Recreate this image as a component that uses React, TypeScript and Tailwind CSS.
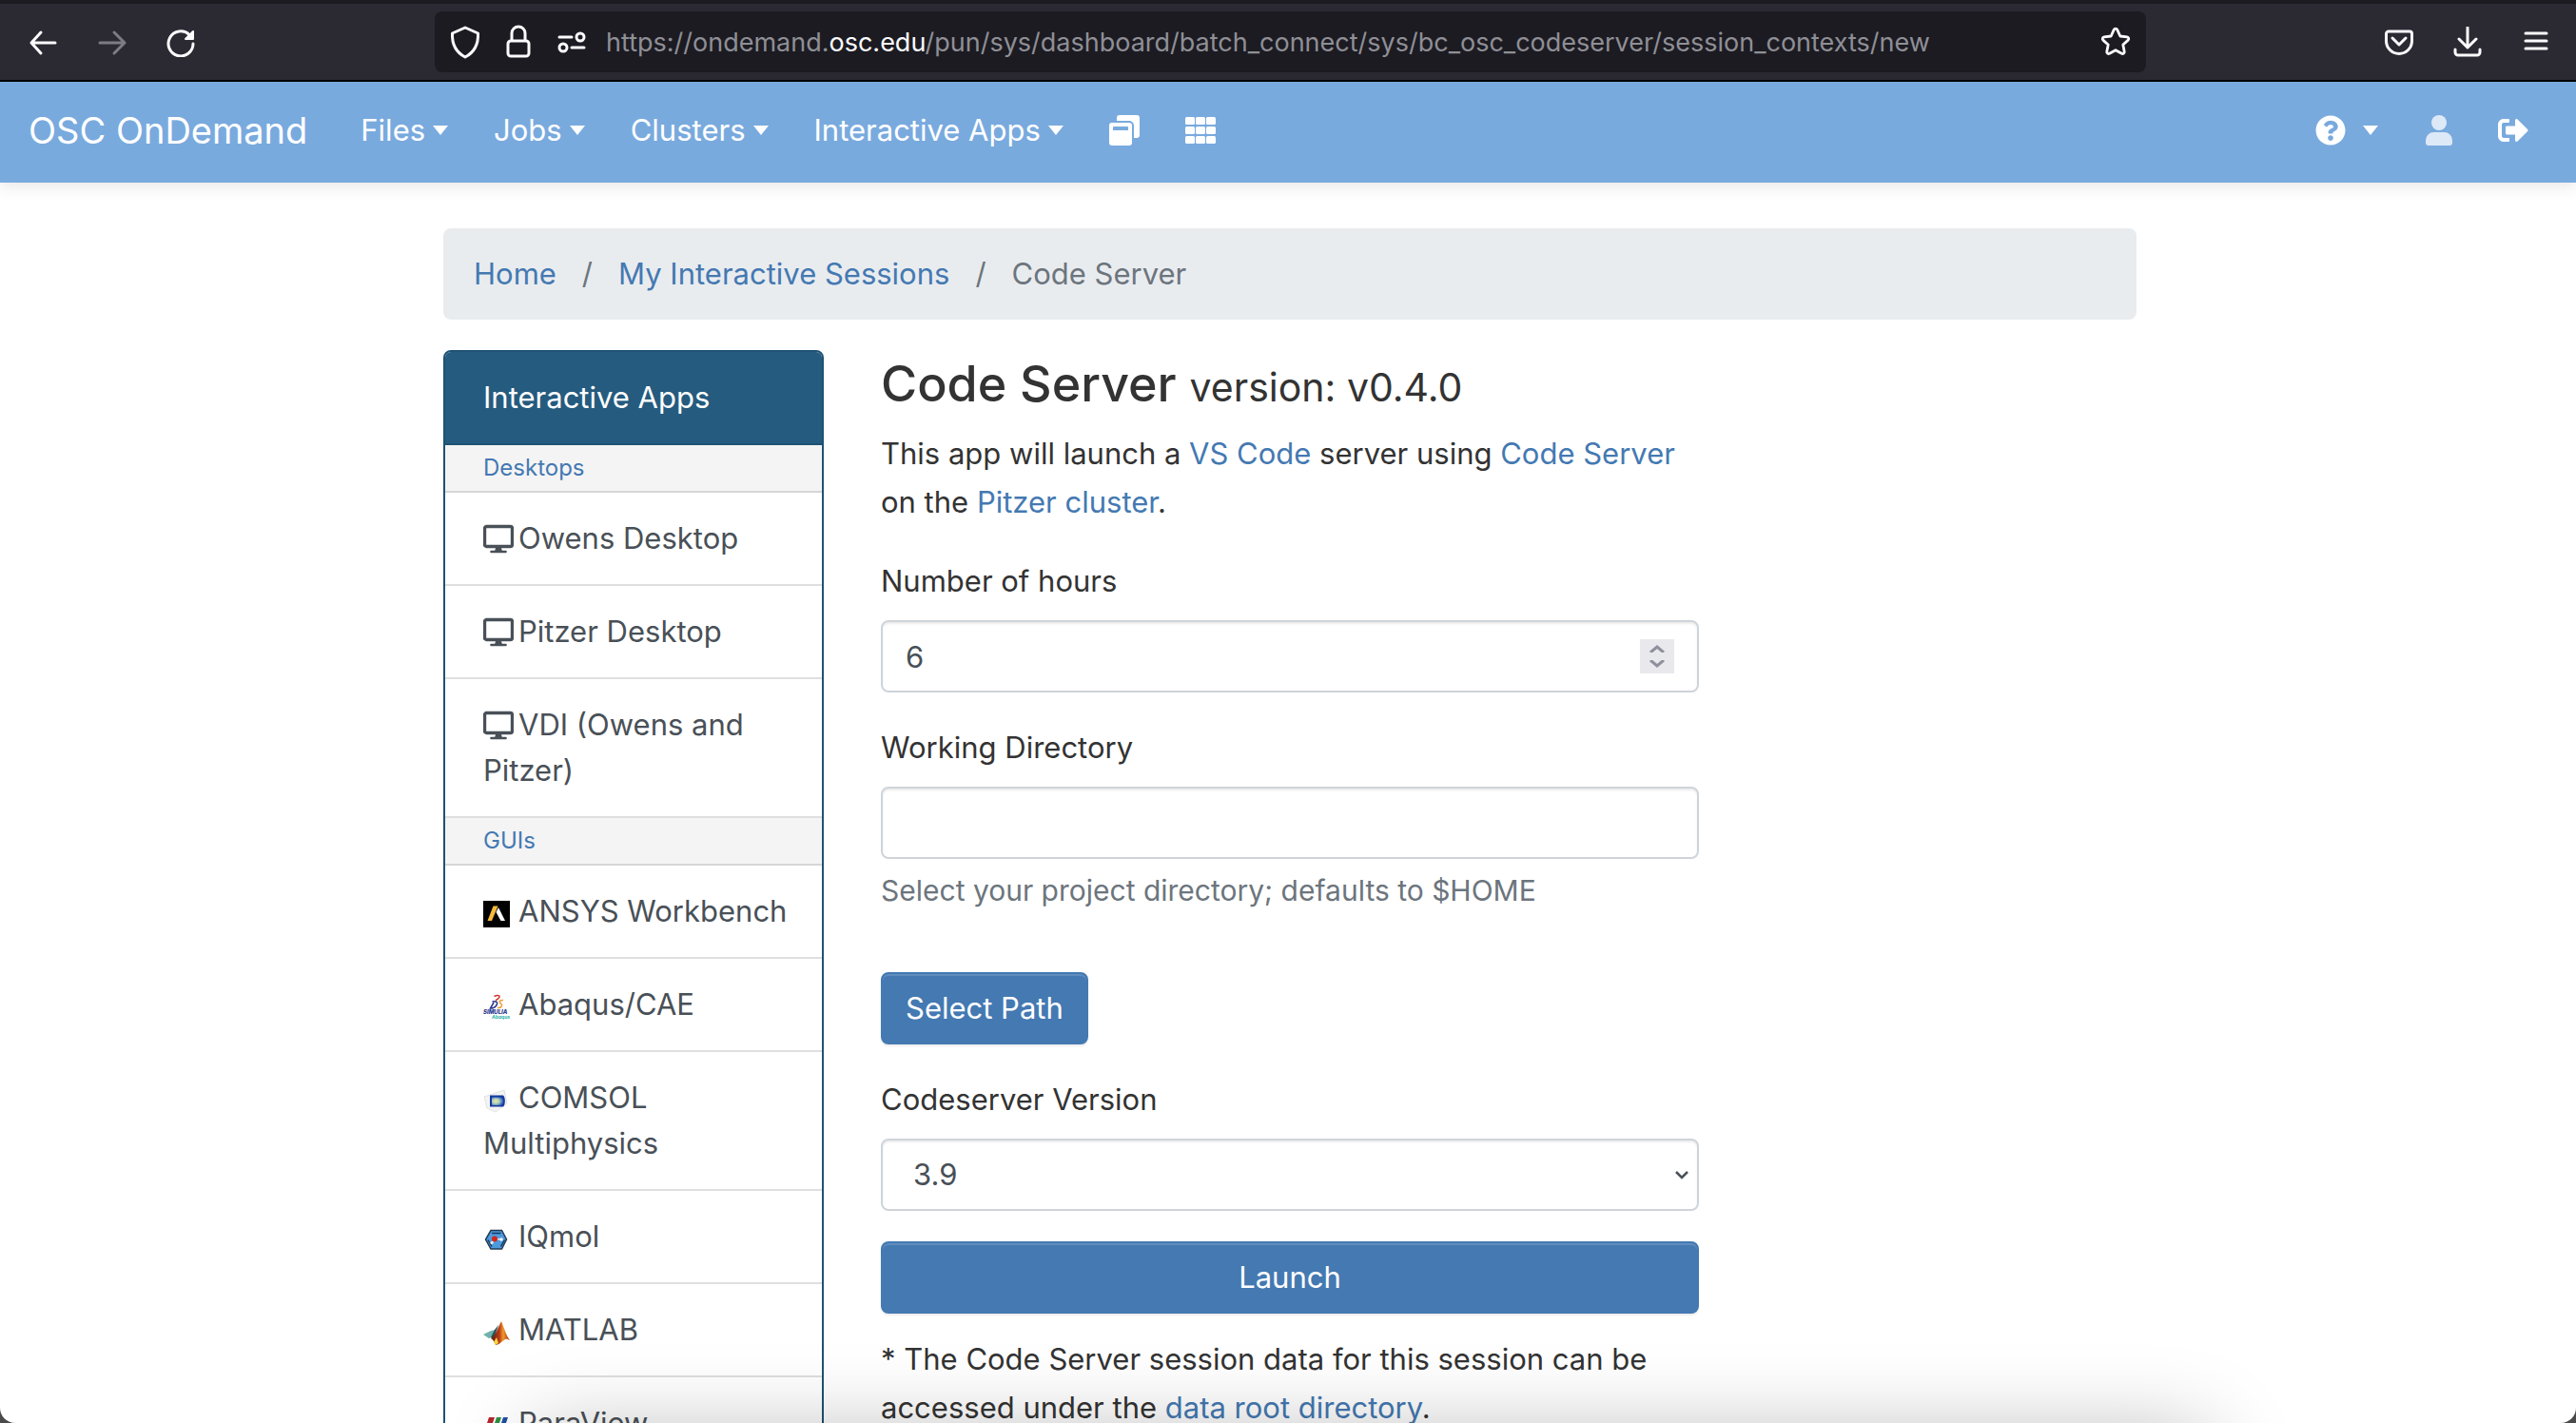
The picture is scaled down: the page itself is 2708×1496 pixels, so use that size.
import { useState } from "react";
import type { ReactNode } from "react";

function Caret() {
  return <span className="h-0 w-0 border-x-8 border-t-10 border-x-transparent border-t-white" />;
}

function NavMenu({ label }: { label: string }) {
  return (
    <button className="flex items-center gap-2 text-[31px] leading-12 text-white">
      {label}
      <Caret />
    </button>
  );
}

function BrowserBar() {
  return (
    <header className="flex h-[86px] items-center border-t-4 border-b-2 border-t-[#1c1b22] border-b-black bg-[#2b2a33] pr-[26px] pl-[30px]">
      <div className="flex w-[427px] shrink-0 items-center gap-[40px]">
        <button aria-label="Back">
          <svg className="h-8 w-8" viewBox="0 0 32 32" fill="none" stroke="#fbfbfe" strokeWidth="3" strokeLinecap="round" strokeLinejoin="round">
            <path d="M28 17H3M13 6 3 17l10 11" />
          </svg>
        </button>
        <button aria-label="Forward">
          <svg className="h-8 w-8" viewBox="0 0 32 32" fill="none" stroke="#7d7c83" strokeWidth="3" strokeLinecap="round" strokeLinejoin="round">
            <path d="M3 17h26M18 6l11 11-11 11" />
          </svg>
        </button>
        <button aria-label="Reload">
          <svg className="h-8 w-8" viewBox="0 0 32 32" fill="none" stroke="#fbfbfe" strokeWidth="3" strokeLinecap="round" strokeLinejoin="round">
            <path d="M29 18A13 13 0 1 1 25 8.500" />
            <path d="M29 5v8h-8z" fill="#fbfbfe" strokeWidth="2" />
          </svg>
        </button>
      </div>
      <div className="flex h-16 w-[1799px] items-center gap-[24px] rounded-lg bg-[#1c1b22] px-4">
        <svg className="h-9 w-8 shrink-0" viewBox="0 0 32 36" fill="none" stroke="#fbfbfe" strokeWidth="3" strokeLinejoin="round">
          <path d="M16 3 29.500 9c.5 11-3 19.500-13.500 25C5.500 28.500 2 20 2.500 9z" />
        </svg>
        <svg className="h-9 w-8 shrink-0" viewBox="0 0 32 36" fill="none" stroke="#fbfbfe" strokeWidth="3" strokeLinejoin="round">
          <rect x="5" y="17" width="22" height="16" rx="3" />
          <path d="M9 17V9a7 7 0 0 1 14 0v8" />
        </svg>
        <svg className="h-9 w-8 shrink-0" viewBox="0 0 32 36" fill="none" stroke="#fbfbfe" strokeWidth="3" strokeLinecap="round">
          <path d="M3 13h13M16 24h13" />
          <circle cx="25" cy="13" r="4" />
          <circle cx="7" cy="24" r="4" />
        </svg>
        <div
          role="textbox"
          aria-label="Search or enter address"
          contentEditable
          suppressContentEditableWarning
          spellCheck={false}
          className="-ml-1 min-w-0 flex-1 truncate pt-0.5 text-[27px] leading-10 text-[#8f8f96]"
        >
          https://ondemand.<span className="text-[#fbfbfe]">osc.edu</span>
          /pun/sys/dashboard/batch_connect/sys/bc_osc_codeserver/session_contexts/new
        </div>
        <button aria-label="Bookmark this page">
          <svg className="h-8 w-8" viewBox="0 0 32 32" fill="none" stroke="#fbfbfe" strokeWidth="2.800" strokeLinejoin="round">
            <path d="M14.300 3.200c.7-1.500 2.700-1.500 3.400 0l3.100 6.800 7.300.9c1.600.2 2.200 2.100 1.100 3.200L23.800 19l1.400 7.300c.3 1.600-1.400 2.800-2.800 2L16 24.700l-6.400 3.600c-1.400.8-3.100-.4-2.800-2L8.200 19l-5.400-4.900c-1.100-1.100-.5-3 1.100-3.200l7.300-.9z" />
          </svg>
        </button>
      </div>
      <div className="ml-auto flex items-center gap-[40px]">
        <button aria-label="Save to Pocket">
          <svg className="h-8 w-8" viewBox="0 0 32 32" fill="none" stroke="#fbfbfe" strokeWidth="3" strokeLinecap="round" strokeLinejoin="round">
            <path d="M5 5h22a2.500 2.500 0 0 1 2.500 2.500V15a13.500 13.500 0 0 1-27 0V7.500A2.500 2.500 0 0 1 5 5z" />
            <path d="m9 12 7 7 7-7" />
          </svg>
        </button>
        <button aria-label="Downloads">
          <svg className="h-8 w-8" viewBox="0 0 32 32" fill="none" stroke="#fbfbfe" strokeWidth="3" strokeLinecap="round" strokeLinejoin="round">
            <path d="M16 1v21M7 13l9 9 9-9M3 24v3a3 3 0 0 0 3 3h20a3 3 0 0 0 3-3v-3" />
          </svg>
        </button>
        <button aria-label="Menu">
          <svg className="h-8 w-8" viewBox="0 0 32 32" fill="none" stroke="#fbfbfe" strokeWidth="3" strokeLinecap="round">
            <path d="M5 7h22M5 15h22M5 23h22" />
          </svg>
        </button>
      </div>
    </header>
  );
}

function NavBar() {
  return (
    <nav className="relative flex h-[106px] items-center bg-[#79aade] px-[30px] pb-1 text-white shadow-[0_4px_16px_rgba(0,0,0,0.1)]">
      <a href="#home" className="text-[38px] leading-15">OSC OnDemand</a>
      <div className="ml-[56px] flex items-center gap-12">
        <NavMenu label="Files" />
        <NavMenu label="Jobs" />
        <NavMenu label="Clusters" />
        <NavMenu label="Interactive Apps" />
        <a href="#sessions" aria-label="My Interactive Sessions">
          <svg className="h-8 w-8" viewBox="0 0 32 32" fill="currentColor">
            <path d="M11 0h18a3 3 0 0 1 3 3v18a3 3 0 0 1-3 3h-3V11a5 5 0 0 0-5-5H8V3a3 3 0 0 1 3-3z" />
            <path fillRule="evenodd" d="M3 8h18a3 3 0 0 1 3 3v18a3 3 0 0 1-3 3H3a3 3 0 0 1-3-3V11a3 3 0 0 1 3-3zm2 4a1 1 0 0 0-1 1v3h16v-3a1 1 0 0 0-1-1z" />
          </svg>
        </a>
        <a href="#apps" aria-label="All Apps">
          <svg className="h-8 w-8" viewBox="0 0 32 32" fill="currentColor">
            {[2, 12, 22].map((y) => [0, 11, 22].map((x) => <rect key={`${x}-${y}`} x={x} y={y} width="10" height="8" rx="1.500" />))}
          </svg>
        </a>
      </div>
      <div className="ml-auto flex items-center">
        <button aria-label="Help" className="flex items-center gap-[18px]">
          <svg className="h-8 w-8" viewBox="0 0 512 512" fill="currentColor">
            <path d="M504 256c0 137-111 248-248 248S8 393 8 256 119 8 256 8s248 111 248 248zM262.700 90c-54.500 0-89.300 23-116.500 63.800-3.500 5.300-2.400 12.400 2.700 16.300l34.700 26.300c5.200 3.900 12.600 3 16.700-2.100 17.900-22.700 30.100-35.800 57.300-35.800 20.400 0 45.700 13.100 45.700 33 0 15-12.400 22.700-32.500 34C247.100 238.500 216 254.900 216 296v4c0 6.600 5.400 12 12 12h56c6.600 0 12-5.400 12-12v-1.300c0-28.500 83.200-29.600 83.200-106.700 0-58-60.200-102-116.500-102zM256 338c-25.400 0-46 20.600-46 46s20.600 46 46 46 46-20.600 46-46-20.600-46-46-46z" />
          </svg>
          <Caret />
        </button>
        <a href="#user" aria-label="User" className="ml-[50px] text-[#dde9f7]">
          <svg className="h-8 w-7" viewBox="0 0 28 32" fill="currentColor">
            <circle cx="14" cy="8" r="8" />
            <path d="M8.500 18h11a8.500 8.500 0 0 1 8.500 8.500V29a3 3 0 0 1-3 3H3a3 3 0 0 1-3-3v-2.500A8.500 8.500 0 0 1 8.500 18z" />
          </svg>
        </a>
        <a href="#logout" aria-label="Log Out" className="mr-[20px] ml-12">
          <svg className="h-8 w-8" viewBox="0 0 512 512" fill="currentColor">
            <path d="M497 273 329 441c-15 15-41 4.500-41-17v-96H152c-13.300 0-24-10.700-24-24v-96c0-13.300 10.700-24 24-24h136V88c0-21.400 25.900-32 41-17l168 168c9.300 9.400 9.300 24.600 0 34zM192 436v-40c0-6.600-5.400-12-12-12H96c-17.700 0-32-14.300-32-32V160c0-17.700 14.300-32 32-32h84c6.600 0 12-5.400 12-12V76c0-6.600-5.400-12-12-12H96c-53 0-96 43-96 96v192c0 53 43 96 96 96h84c6.600 0 12-5.400 12-12z" />
          </svg>
        </a>
      </div>
    </nav>
  );
}

const iconClass = "mr-[9px] inline-block h-7 w-7 align-[-6px]";

function DesktopIcon() {
  return (
    <svg className="mr-[5px] inline-block h-8 w-8 align-[-6px]" viewBox="0 0 32 32" fill="none" stroke="#495057" strokeLinejoin="round">
      <rect x="1.500" y="2.500" width="29" height="21" rx="2" strokeWidth="3.400" />
      <path d="M13 25h6l1 4h-8z" fill="#495057" stroke="none" />
      <path d="M8.500 29h15" strokeWidth="2.600" strokeLinecap="round" />
    </svg>
  );
}

function AnsysIcon() {
  return (
    <svg className={iconClass} viewBox="0 0 28 28">
      <path fill="#000" d="M0 0h28v28H0z" />
      <path fill="#f5b93b" d="M10.500 5.500h5L9 21H4.500z" />
      <path fill="#fff" d="M13.500 12l2.500-5 7 14h-4.500z" />
    </svg>
  );
}

function AbaqusIcon() {
  return (
    <svg className={iconClass} viewBox="0 0 28 28" fill="none">
      <path d="M11.500 2.500c4-2 7-.8 5 1.500-.8 1-2 2-3.500 2.500" stroke="#d0342c" strokeWidth="1.400" />
      <path d="M9.500 8c6-.8 6 1.500 4 4.500-1.500 2-3.500 2.500-6 2.500L11 9" stroke="#27348b" strokeWidth="1.500" />
      <path d="M21 6.500c-3-.3-4.500 1-3.500 2.500s2.500 1.500 2 3.500-2.500 2-4.500 2" stroke="#e9a23b" strokeWidth="1.500" />
      <text x="0" y="21" fontSize="6" fontWeight="800" fontStyle="italic" fill="#27348b">SIMULIA</text>
      <text x="9" y="25.500" fontSize="5" fontWeight="700" fontStyle="italic" fill="#2bb3ad">Abaqus</text>
    </svg>
  );
}

function ComsolIcon() {
  return (
    <svg className={iconClass} viewBox="0 0 28 28">
      <defs>
        <radialGradient id="comsol" cx="0.35" cy="0.5" r="0.7">
          <stop offset="0" stopColor="#f5e98c" />
          <stop offset="0.45" stopColor="#a9cbc4" />
          <stop offset="1" stopColor="#1745b0" />
        </radialGradient>
      </defs>
      <path d="M1 10 22 3l3 14-12 9-9-4z" fill="#f4f4f4" stroke="#e2e2e2" />
      <path d="M7 8.500h14c2.500 2 2.500 10 0 12H7z" fill="#143a9c" />
      <path d="M9 10.500h11c1.500 2 1.500 6.500 0 8.500H9z" fill="url(#comsol)" />
    </svg>
  );
}

function IQmolIcon() {
  return (
    <svg className={iconClass} viewBox="0 0 28 28">
      <path d="M8 4.500h11.500l5 9.500-5 10H8L2.500 14z" fill="#4d9ade" stroke="#253b52" strokeWidth="1.500" />
      <path d="M9 7.500h9.500M5 14.500l4 7M22.500 14.500l-4 7" stroke="#16395f" strokeWidth="1.500" />
      <path d="M12 13.500 19 14M12 14l-3 3.500" stroke="#dfe8f2" strokeWidth="1.500" />
      <circle cx="12" cy="13.500" r="3" fill="#d3261b" />
      <circle cx="19" cy="14" r="1.800" fill="#f4f7fa" />
      <circle cx="9" cy="17.500" r="1.600" fill="#e7edf4" />
    </svg>
  );
}

function MatlabIcon() {
  return (
    <svg className={iconClass} viewBox="0 0 28 28">
      <defs>
        <linearGradient id="matlab" x1="0" x2="1">
          <stop offset="0" stopColor="#5a1a0d" />
          <stop offset="0.45" stopColor="#b93c16" />
          <stop offset="0.65" stopColor="#f09a2c" />
          <stop offset="1" stopColor="#a32c12" />
        </linearGradient>
      </defs>
      <path d="M0 16l8-4 5-1-4 8-3 1z" fill="#6fb3ab" />
      <path d="M12 11l4-5-5 15-3-2z" fill="#2c4f55" />
      <path d="M8 20c4-1 7-10 11-18 3 7 5 15 9 20-3-1-4-2-6 0-3 1-5 5-9 5-1-3-3-6-5-7z" fill="url(#matlab)" />
      <path d="M11 24l3-5 2 6-3 2z" fill="#f7d33f" />
    </svg>
  );
}

function ParaViewIcon() {
  return (
    <svg className={iconClass} viewBox="0 0 28 28">
      <path fill="#b3262d" d="M6 5h6L6 23H0z" />
      <path fill="#2f8f43" d="M14 5h5l-6 18H8z" />
      <path fill="#1f4fa0" d="M21 5h5l-6 18h-5z" />
    </svg>
  );
}

function GroupHeading({ children }: { children: ReactNode }) {
  return (
    <h3 className="border-b-2 border-[#d6d6d6] bg-[#f4f4f4] px-10 py-[6px] text-[24px] leading-9 text-[#4479b2]">{children}</h3>
  );
}

function AppLink({ icon, children }: { icon: ReactNode; children: ReactNode }) {
  return (
    <a href="#app" className="block border-b-2 border-[#dfdfdf] py-6 pr-8 pl-10 text-[31px] leading-12 text-[#495057]">
      {icon}
      {children}
    </a>
  );
}

function Sidebar() {
  return (
    <aside className="w-[400px] shrink-0 overflow-hidden rounded-t-lg border-2 border-[#1f5273]">
      <h2 className="border-b-2 border-[#1f5273] bg-[#255b7e] px-10 py-6 text-[31px] leading-12 text-white">Interactive Apps</h2>
      <GroupHeading>Desktops</GroupHeading>
      <AppLink icon={<DesktopIcon />}>Owens Desktop</AppLink>
      <AppLink icon={<DesktopIcon />}>Pitzer Desktop</AppLink>
      <AppLink icon={<DesktopIcon />}>VDI (Owens and Pitzer)</AppLink>
      <GroupHeading>GUIs</GroupHeading>
      <AppLink icon={<AnsysIcon />}>ANSYS Workbench</AppLink>
      <AppLink icon={<AbaqusIcon />}>Abaqus/CAE</AppLink>
      <AppLink icon={<ComsolIcon />}>COMSOL Multiphysics</AppLink>
      <AppLink icon={<IQmolIcon />}>IQmol</AppLink>
      <AppLink icon={<MatlabIcon />}>MATLAB</AppLink>
      <AppLink icon={<ParaViewIcon />}>ParaView</AppLink>
    </aside>
  );
}

const labelClass = "block leading-[51px]";
const fieldClass =
  "block h-[76px] w-full appearance-none rounded-lg border-2 border-[#ced4da] bg-white px-6 text-[#495057] shadow-[inset_0_2px_2px_rgba(0,0,0,0.08)]";
const buttonClass =
  "h-[76px] rounded-lg border-2 border-[#4479b2] bg-[#4479b2] px-6 text-white shadow-[inset_0_2px_0_rgba(255,255,255,0.15),0_2px_2px_rgba(0,0,0,0.08)]";
const linkClass = "text-[#4479b2]";

function SessionForm() {
  const [hours, setHours] = useState(6);
  const [directory, setDirectory] = useState("");
  return (
    <main className="w-[860px] text-[31px]">
      <h1 className="text-[52px] leading-[72px] font-medium">
        Code Server <small className="text-[41px] font-normal">version: v0.4.0</small>
      </h1>
      <p className="mt-2 leading-[51px]">
        This app will launch a <a href="#vscode" className={linkClass}>VS Code</a> server using{" "}
        <a href="#codeserver" className={linkClass}>Code Server</a> on the <a href="#pitzer" className={linkClass}>Pitzer cluster</a>.
      </p>
      <form className="mt-8" onSubmit={(event) => event.preventDefault()}>
        <label htmlFor="hours" className={labelClass}>Number of hours</label>
        <div className="relative mt-4">
          <input
            id="hours"
            inputMode="numeric"
            className={fieldClass}
            value={hours}
            onChange={(event) => setHours(Number(event.target.value) || 0)}
          />
          <div className="absolute inset-y-0 right-[26px] flex flex-col justify-center">
            <button type="button" aria-label="Increase hours" onClick={() => setHours(hours + 1)} className="flex h-[18px] w-9 items-end justify-center bg-[#e9e9ed] pb-1">
              <svg className="h-2 w-4" viewBox="0 0 16 8" fill="none" stroke="#8f8f9d" strokeWidth="3"><path d="m1 8 7-6 7 6" /></svg>
            </button>
            <button type="button" aria-label="Decrease hours" onClick={() => setHours(hours - 1)} className="flex h-[18px] w-9 items-start justify-center bg-[#e9e9ed] pt-1">
              <svg className="h-2 w-4" viewBox="0 0 16 8" fill="none" stroke="#8f8f9d" strokeWidth="3"><path d="m1 0 7 6 7-6" /></svg>
            </button>
          </div>
        </div>
        <label htmlFor="directory" className={`mt-8 ${labelClass}`}>Working Directory</label>
        <input id="directory" type="text" className={`mt-4 ${fieldClass}`} value={directory} onChange={(event) => setDirectory(event.target.value)} />
        <p className="mt-2 text-[30px] leading-[51px] text-[#6c757d]">Select your project directory; defaults to $HOME</p>
        <button type="button" className={`mt-[60px] ${buttonClass}`}>Select Path</button>
        <label htmlFor="version" className={`mt-8 ${labelClass}`}>Codeserver Version</label>
        <div className="relative mt-4">
          <select id="version" className={`pl-8 ${fieldClass}`} defaultValue="3.9">
            <option>3.9</option>
          </select>
          <svg className="pointer-events-none absolute top-[34px] right-[10px] h-[10px] w-4" viewBox="0 0 16 10" fill="none" stroke="#495057" strokeWidth="2.500"><path d="m2 1 6 6 6-6" /></svg>
        </div>
        <button type="submit" className={`mt-8 w-full ${buttonClass}`}>Launch</button>
      </form>
      <p className="mt-[22px] leading-[51px]">
        * The Code Server session data for this session can be accessed under the{" "}
        <a href="#data" className={linkClass}>data root directory</a>.
      </p>
    </main>
  );
}

export default function App() {
  return (
    <div className="bg-[#4a4a4a]">
      <div className="relative h-screen overflow-hidden rounded-b-2xl bg-white font-['Inter',sans-serif] text-[#333333]">
        <BrowserBar />
        <NavBar />
        <div className="pt-12 pl-1">
          <div className="mx-auto max-w-[1780px]">
            <ol className="flex h-24 items-center gap-[27px] rounded-lg bg-[#e9ecef] px-8 text-[31px] text-[#6c757d]">
              <li><a href="#home" className={linkClass}>Home</a></li>
              <li aria-hidden="true">/</li>
              <li><a href="#sessions" className={linkClass}>My Interactive Sessions</a></li>
              <li aria-hidden="true">/</li>
              <li aria-current="page">Code Server</li>
            </ol>
            <div className="mt-8 flex items-start gap-[60px]">
              <Sidebar />
              <SessionForm />
            </div>
          </div>
        </div>
        <div className="pointer-events-none absolute right-[388px] -bottom-[140px] left-[560px] h-32 shadow-[0_0_90px_rgba(0,0,0,0.28)]" />
      </div>
    </div>
  );
}
